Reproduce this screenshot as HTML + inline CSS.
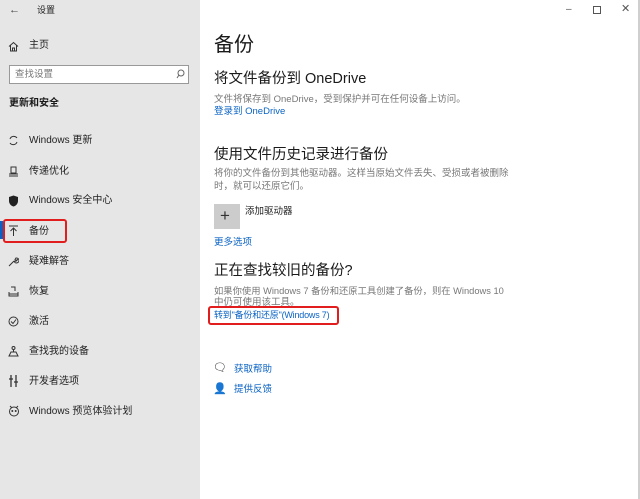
<!DOCTYPE html>
<html><head><meta charset="utf-8"><style>
*{margin:0;padding:0;box-sizing:border-box}
body{width:640px;height:499px;overflow:hidden;background:#fff;font-family:"Liberation Sans","Noto Sans CJK SC",sans-serif;color:#1a1a1a;position:relative}
.side{position:absolute;left:0;top:0;width:200px;height:499px;background:#e6e6e6}
.t{position:absolute;white-space:nowrap;line-height:1}
.s{font-size:10px;color:#222}
.g{color:#777;font-size:9.5px}
.b{color:#0a63c4}
.rb{position:absolute;border:2px solid #e21d1d;border-radius:3px}
</style></head><body>
<div class="side"></div>
<div style="position:absolute;left:638px;top:0;width:2px;height:499px;background:#cfcfcf"></div>
<div class="t" style="left:9px;top:5px;font-size:11px;color:#444">←</div>
<div class="t s" style="left:37px;top:6px;font-size:9px">设置</div>
<svg style="position:absolute;left:8px;top:41px" width="11" height="11" viewBox="0 0 11 11"><path d="M1 5.5L5.5 1.5 10 5.5M2.5 4.5V10h6V4.5M4.5 10V7h2v3" fill="none" stroke="#333" stroke-width="1"/></svg>
<div class="t s" style="left:29px;top:41px">主页</div>
<div style="position:absolute;left:9px;top:65px;width:180px;height:19px;border:1px solid #999;background:#fff"></div>
<div class="t" style="left:15px;top:70px;font-size:9.5px;color:#777">查找设置</div>
<svg style="position:absolute;left:176px;top:69px" width="9" height="10" viewBox="0 0 9 10"><circle cx="5" cy="4" r="3" fill="none" stroke="#666"/><path d="M3 6L1 9" stroke="#666"/></svg>
<div class="t" style="left:9px;top:99px;font-size:10px;font-weight:bold">更新和安全</div>
<svg style="position:absolute;left:8px;top:135px" width="11" height="11" viewBox="0 0 11 11"><path d="M2 4A4 4 0 0 1 9 3M9 7A4 4 0 0 1 2 8" fill="none" stroke="#333"/></svg>
<div class="t s" style="left:29px;top:136px">Windows 更新</div>
<svg style="position:absolute;left:8px;top:166px" width="11" height="11" viewBox="0 0 11 11"><path d="M3 1h5v6H3zM1 10h9M1 8h9" fill="none" stroke="#333"/></svg>
<div class="t s" style="left:29px;top:167px">传递优化</div>
<svg style="position:absolute;left:8px;top:195px" width="11" height="12" viewBox="0 0 11 12"><path d="M5.5 0.5L10 2v4c0 3-2.5 5-4.5 5.5C3.5 11 1 9 1 6V2z" fill="#222"/></svg>
<div class="t s" style="left:29px;top:196px">Windows 安全中心</div>
<div style="position:absolute;left:0;top:221px;width:3px;height:18px;background:#0a63c4"></div>
<svg style="position:absolute;left:8px;top:225px" width="11" height="12" viewBox="0 0 11 12"><path d="M1 1h9M5.5 11V3M2.5 6l3-3 3 3" fill="none" stroke="#333"/></svg>
<div class="t s" style="left:29px;top:227px">备份</div>
<div class="rb" style="left:3px;top:219px;width:64px;height:24px"></div>
<svg style="position:absolute;left:8px;top:256px" width="11" height="11" viewBox="0 0 11 11"><path d="M1 10l5-5M6 5a2.5 2.5 0 1 0 2-3L7 3.5 8 4.5 9.5 3.5A2.5 2.5 0 0 1 6 5" fill="none" stroke="#333"/></svg>
<div class="t s" style="left:29px;top:257px">疑难解答</div>
<svg style="position:absolute;left:8px;top:286px" width="11" height="11" viewBox="0 0 11 11"><path d="M3 1h4v4M1 6v4h9V6M1 8h9" fill="none" stroke="#333"/></svg>
<div class="t s" style="left:29px;top:287px">恢复</div>
<svg style="position:absolute;left:8px;top:316px" width="11" height="11" viewBox="0 0 11 11"><circle cx="5.5" cy="5.5" r="4.5" fill="none" stroke="#333"/><path d="M3 5.5l2 2 3-4" fill="none" stroke="#333"/></svg>
<div class="t s" style="left:29px;top:317px">激活</div>
<svg style="position:absolute;left:8px;top:345px" width="11" height="12" viewBox="0 0 11 12"><circle cx="5.5" cy="3" r="1.5" fill="none" stroke="#333"/><path d="M5.5 4.5V7M1 11h9L8 7H3z" fill="none" stroke="#333"/></svg>
<div class="t s" style="left:29px;top:347px">查找我的设备</div>
<svg style="position:absolute;left:8px;top:375px" width="11" height="12" viewBox="0 0 11 12"><path d="M3 0v12M8 0v12M1 4h4M6 7h4" fill="none" stroke="#333" stroke-width="1.3"/></svg>
<div class="t s" style="left:29px;top:377px">开发者选项</div>
<svg style="position:absolute;left:8px;top:405px" width="12" height="12" viewBox="0 0 12 12"><circle cx="6" cy="6.5" r="4.5" fill="none" stroke="#333"/><circle cx="4.3" cy="6" r="1" fill="#333"/><circle cx="7.7" cy="6" r="1" fill="#333"/><path d="M2 1l2 2M10 1L8 3" stroke="#333"/></svg>
<div class="t s" style="left:29px;top:407px">Windows 预览体验计划</div>

<div class="t" style="left:566px;top:5px;font-size:10px;color:#555">–</div>
<div style="position:absolute;left:593px;top:6px;width:8px;height:8px;border:1px solid #555"></div>
<div class="t" style="left:621px;top:4px;font-size:11px;color:#555">✕</div>

<div class="t" style="left:214px;top:35px;font-size:20px">备份</div>
<div class="t" style="left:214px;top:72px;font-size:14.5px">将文件备份到 OneDrive</div>
<div class="t g" style="left:214px;top:95px">文件将保存到 OneDrive，受到保护并可在任何设备上访问。</div>
<div class="t b" style="left:214px;top:107px;font-size:9.5px">登录到 OneDrive</div>
<div class="t" style="left:214px;top:148px;font-size:14.5px">使用文件历史记录进行备份</div>
<div class="t g" style="left:214px;top:169px">将你的文件备份到其他驱动器。这样当原始文件丢失、受损或者被删除</div>
<div class="t g" style="left:214px;top:182px">时，就可以还原它们。</div>
<div style="position:absolute;left:214px;top:204px;width:26px;height:25px;background:#ccc"></div>
<div class="t" style="left:220px;top:207px;font-size:17px;color:#333">+</div>
<div class="t s" style="left:245px;top:207px;font-size:9.5px">添加驱动器</div>
<div class="t b" style="left:214px;top:238px;font-size:9.5px">更多选项</div>
<div class="t" style="left:214px;top:264px;font-size:14.5px">正在查找较旧的备份?</div>
<div class="t g" style="left:214px;top:287px;font-size:9.3px">如果你使用 Windows 7 备份和还原工具创建了备份，则在 Windows 10</div>
<div class="t g" style="left:214px;top:298px">中仍可使用该工具。</div>
<div class="t b" style="left:214px;top:311px;font-size:9px;letter-spacing:-0.2px">转到"备份和还原"(Windows 7)</div>
<div class="rb" style="left:208px;top:306px;width:131px;height:19px"></div>
<div class="t" style="left:213px;top:363px;font-size:11px">🗨</div>
<div class="t b" style="left:234px;top:365px;font-size:9.5px">获取帮助</div>
<div class="t" style="left:213px;top:384px;font-size:11px">👤</div>
<div class="t b" style="left:234px;top:385px;font-size:9.5px">提供反馈</div>
</body></html>
